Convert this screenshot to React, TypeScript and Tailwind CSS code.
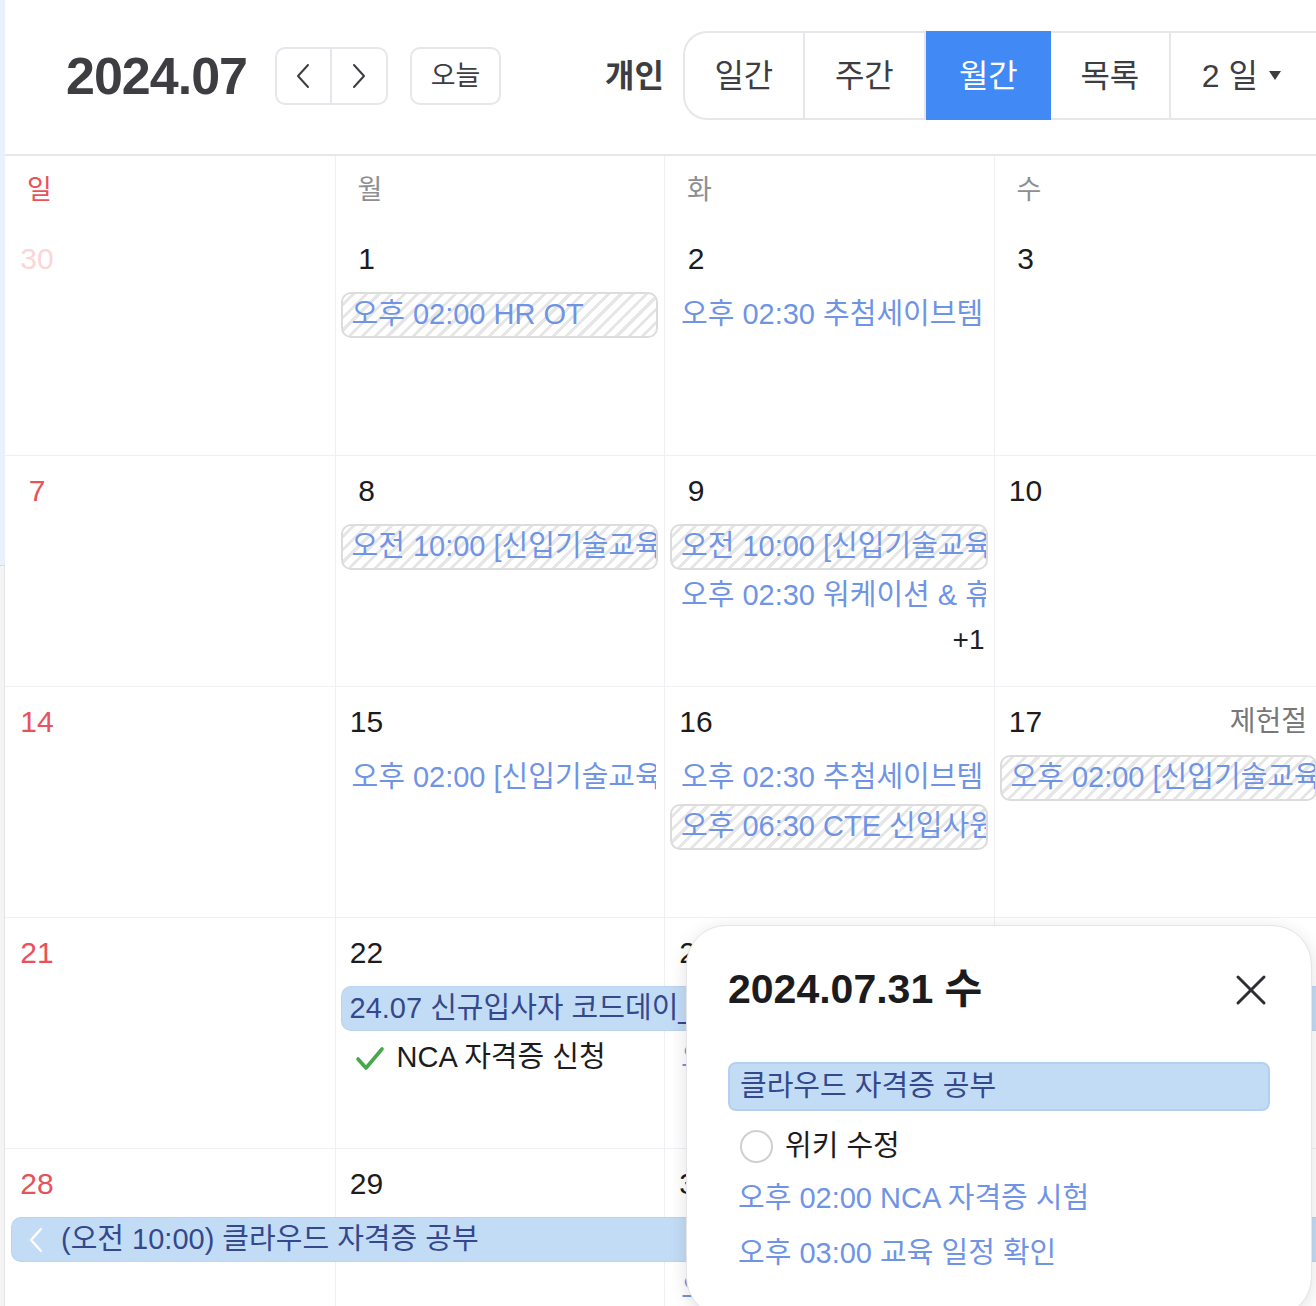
import React from "react";

type Ev =
  | { kind: "hatch" | "plain"; text: string; row: number; span?: number }
  | { kind: "bar"; text: string; row: number; start: number; end: number; chevron?: boolean }
  | { kind: "check"; text: string; row: number }
  | { kind: "more"; text: string; row: number };

type Day = { d: number; prev?: boolean; holiday?: string; events?: Ev[] };

const COLSTART = ["col-start-1", "col-start-2", "col-start-3", "col-start-4", "col-start-5", "col-start-6", "col-start-7"];
const COLEND = ["col-end-1", "col-end-2", "col-end-3", "col-end-4", "col-end-5", "col-end-6", "col-end-7", "col-end-8"];
const ROWSTART = ["row-start-1", "row-start-2", "row-start-3", "row-start-4", "row-start-5"];

const weeks: Day[][] = [
  [
    { d: 30, prev: true },
    { d: 1, events: [{ kind: "hatch", text: "오후 02:00 HR OT", row: 2 }] },
    { d: 2, events: [{ kind: "plain", text: "오후 02:30 추첨세이브템", row: 2 }] },
    { d: 3 },
    { d: 4 },
    { d: 5 },
    { d: 6 },
  ],
  [
    { d: 7 },
    { d: 8, events: [{ kind: "hatch", text: "오전 10:00 [신입기술교육] 온보딩", row: 2 }] },
    {
      d: 9,
      events: [
        { kind: "hatch", text: "오전 10:00 [신입기술교육] 온보딩", row: 2 },
        { kind: "plain", text: "오후 02:30 워케이션 & 휴가", row: 3 },
        { kind: "more", text: "+1", row: 4 },
      ],
    },
    { d: 10 },
    { d: 11 },
    { d: 12 },
    { d: 13 },
  ],
  [
    { d: 14 },
    { d: 15, events: [{ kind: "plain", text: "오후 02:00 [신입기술교육] 실습", row: 2 }] },
    {
      d: 16,
      events: [
        { kind: "plain", text: "오후 02:30 추첨세이브템", row: 2 },
        { kind: "hatch", text: "오후 06:30 CTE 신입사원 모임", row: 3 },
      ],
    },
    { d: 17, holiday: "제헌절", events: [{ kind: "hatch", text: "오후 02:00 [신입기술교육] 실습", row: 2 }] },
    { d: 18 },
    { d: 19 },
    { d: 20 },
  ],
  [
    { d: 21 },
    {
      d: 22,
      events: [
        { kind: "bar", text: "24.07 신규입사자 코드데이_온보딩 프로젝트", row: 2, start: 2, end: 8 },
        { kind: "check", text: "NCA 자격증 신청", row: 3 },
      ],
    },
    { d: 23, events: [{ kind: "plain", text: "오후 02:00 교육 일정", row: 3 }] },
    { d: 24 },
    { d: 25 },
    { d: 26 },
    { d: 27 },
  ],
  [
    {
      d: 28,
      events: [{ kind: "bar", text: "(오전 10:00) 클라우드 자격증 공부", row: 2, start: 1, end: 8, chevron: true }],
    },
    { d: 29 },
    { d: 30, events: [{ kind: "plain", text: "오후 02:00 NCA", row: 3 }] },
    { d: 31 },
    { d: 1, prev: true },
    { d: 2, prev: true },
    { d: 3, prev: true },
  ],
];

const WEEKDAYS = ["일", "월", "화", "수", "목", "금", "토"];

const HATCH =
  "bg-[repeating-linear-gradient(135deg,#ffffff_0px,#ffffff_6px,#e6e6e6_6px,#e6e6e6_9px)] border-2 border-[#dcdcdc]";

function EventItem({ ev, col }: { ev: Ev; col: number }) {
  if (ev.kind === "bar") {
    return (
      <div
        className={`${ROWSTART[ev.row - 1]} ${COLSTART[ev.start - 1]} ${COLEND[ev.end - 1]} self-start ml-[6px] h-[45px] rounded-l-[10px] bg-[#c3dcf5] border border-[#b9d3f0] border-r-0 flex items-center pl-[8px] overflow-hidden whitespace-nowrap text-[29px] text-[#35488c]`}
      >
        {ev.chevron && (
          <svg width="14" height="26" viewBox="0 0 14 26" className="mr-[18px] ml-[9px] shrink-0">
            <polyline points="12,2 2,13 12,24" fill="none" stroke="#ffffff" strokeWidth="2.4" strokeLinecap="round" strokeLinejoin="round" />
          </svg>
        )}
        {ev.text}
      </div>
    );
  }
  const pos = `${ROWSTART[ev.row - 1]} ${COLSTART[col]}`;
  if (ev.kind === "more") {
    return (
      <div className={`${pos} self-start h-[36px] leading-[36px] text-right pr-[9px] text-[28px] text-[#1f1f1f]`}>
        {ev.text}
      </div>
    );
  }
  if (ev.kind === "check") {
    return (
      <div className={`${pos} self-start h-[46px] ml-[20px] flex items-center whitespace-nowrap overflow-hidden text-[29px] text-[#1c1c1e]`}>
        <svg width="30" height="27" viewBox="0 0 30 27" className="mr-[12px] shrink-0">
          <polyline points="3,14 11,23 27,4" fill="none" stroke="#46a84c" strokeWidth="3.6" strokeLinecap="round" strokeLinejoin="round" />
        </svg>
        {ev.text}
      </div>
    );
  }
  return (
    <div
      className={`${pos} self-start mx-[6px] h-[46px] rounded-[10px] flex items-center px-[9px] overflow-hidden whitespace-nowrap text-[29px] text-[#6f94e6] ${
        ev.kind === "hatch" ? HATCH : "border-2 border-transparent"
      }`}
    >
      {ev.text}
    </div>
  );
}

function Week({ days, first }: { days: Day[]; first: boolean }) {
  return (
    <div
      className={`grid grid-cols-[repeat(7,329.5px)] grid-rows-[68px_49px_49px_49px_1fr] h-[231px] shrink-0 ${
        first ? "" : "border-t-[1.5px] border-[#eff0f4]"
      }`}
    >
      {days.map((_, i) => (
        <div
          key={"bg" + i}
          className={`row-start-1 row-end-6 ${COLSTART[i]} ${i === 0 ? "" : "border-l-[1.5px] border-[#eff0f4]"}`}
        />
      ))}
      {days.map((day, i) => {
        const color = i === 0 ? (day.prev ? "text-[#fcd6d6]" : "text-[#e8525a]") : day.prev ? "text-[#c4c4c8]" : "text-[#1c1c1e]";
        return (
          <div key={"n" + i} className={`row-start-1 ${COLSTART[i]} flex items-start justify-between pt-[18px]`}>
            <div className={`ml-[12px] w-[40px] text-center text-[30px] leading-[34px] ${color}`}>{day.d}</div>
            {day.holiday && (
              <div className="mr-[16px] text-[28px] leading-[34px] text-[#77777c]">{day.holiday}</div>
            )}
          </div>
        );
      })}
      {days.map((day, i) => (day.events || []).map((ev, k) => <EventItem key={"e" + i + "-" + k} ev={ev} col={i} />))}
    </div>
  );
}

export default function App() {
  return (
    <div className="relative flex w-[1316px] h-[1306px] overflow-hidden bg-white font-['Liberation_Sans','Noto_Sans_CJK_KR',sans-serif]">
      {/* left sidebar edge */}
      <div className="w-[5px] shrink-0 flex flex-col">
        <div className="h-[565px] bg-[#e9f2fc]" />
        <div className="flex-1 bg-[#f4f4f5] border-t border-[#dadada] border-r border-r-[#e4e4e7]" />
      </div>

      <div className="flex-1 min-w-0 flex flex-col overflow-hidden">
        {/* header */}
        <div className="h-[156px] shrink-0 border-b-2 border-[#e8e8ec] flex items-start whitespace-nowrap">
          <div className="flex items-center h-[152px] pl-[61px]">
            <div className="text-[52px] font-bold tracking-[-1px] text-[#3d3d42] leading-none">2024.07</div>
            <div className="ml-[28px] flex h-[58px] w-[113px] rounded-[10px] border-2 border-[#e6e7eb]">
              <div className="w-[55px] flex items-center justify-center border-r-2 border-[#e6e7eb]">
                <svg width="16" height="26" viewBox="0 0 16 26">
                  <polyline points="13,2 3,13 13,24" fill="none" stroke="#3d3d42" strokeWidth="2" strokeLinecap="round" strokeLinejoin="round" />
                </svg>
              </div>
              <div className="flex-1 flex items-center justify-center">
                <svg width="16" height="26" viewBox="0 0 16 26">
                  <polyline points="3,2 13,13 3,24" fill="none" stroke="#3d3d42" strokeWidth="2" strokeLinecap="round" strokeLinejoin="round" />
                </svg>
              </div>
            </div>
            <div className="ml-[22px] h-[58px] w-[91px] rounded-[10px] border-2 border-[#e6e7eb] flex items-center justify-center text-[27px] text-[#3d3d42]">
              오늘
            </div>
            <div className="ml-[104px] text-[32px] font-bold text-[#3d3d42]">개인</div>
          </div>
          <div className="ml-[19px] mt-[31px] flex h-[89px] rounded-l-[24px] border-2 border-r-0 border-[#e6e7eb] text-[32px] text-[#3d3d42] shrink-0">
            <div className="w-[120px] flex items-center justify-center border-r-2 border-[#e6e7eb]">일간</div>
            <div className="w-[121px] flex items-center justify-center border-r-2 border-[#e6e7eb]">주간</div>
            <div className="w-[125px] -my-[2px] flex items-center justify-center bg-[#4189f5] text-white">월간</div>
            <div className="w-[120px] flex items-center justify-center border-r-2 border-[#e6e7eb]">목록</div>
            <div className="w-[160px] flex items-center pl-[31px]">
              <span>2 일</span>
              <svg width="12" height="9" viewBox="0 0 12 9" className="ml-[11px]">
                <polygon points="0,0 12,0 6,9" fill="#3d3d42" />
              </svg>
            </div>
          </div>
        </div>

        {/* weekday header */}
        <div className="grid grid-cols-[repeat(7,329.5px)] h-[68px] shrink-0">
          {WEEKDAYS.map((w, i) => (
            <div
              key={w}
              className={`pl-[22px] pt-[16px] text-[27px] leading-[36px] ${i === 0 ? "text-[#e8525a]" : "text-[#8e8e93] border-l-[1.5px] border-[#eff0f4]"}`}
            >
              {w}
            </div>
          ))}
        </div>

        {weeks.map((w, i) => (
          <Week key={i} days={w} first={i === 0} />
        ))}
      </div>

      {/* day popup */}
      <div className="absolute left-[686px] top-[925px] w-[626px] h-[392px] rounded-[40px] bg-white border-[1.5px] border-[#e4e4e9] shadow-[0_4px_18px_rgba(0,0,0,0.12)] px-[41px]">
        <div className="flex items-center justify-between h-[136px] pb-[8px]">
          <div className="text-[41px] font-bold text-[#1c1c1e]">2024.07.31 수</div>
          <svg width="32" height="32" viewBox="0 0 32 32" className="mr-[3px]">
            <line x1="3" y1="3" x2="29" y2="29" stroke="#2f2f33" strokeWidth="3" strokeLinecap="round" />
            <line x1="29" y1="3" x2="3" y2="29" stroke="#2f2f33" strokeWidth="3" strokeLinecap="round" />
          </svg>
        </div>
        <div className="h-[49px] rounded-[8px] bg-[#c3dcf5] border-2 border-[#b5d0ef] flex items-center px-[10px] text-[29px] text-[#35488c] whitespace-nowrap">
          클라우드 자격증 공부
        </div>
        <div className="mt-[15px] h-[41px] flex items-center pl-[12px] text-[29px] text-[#1c1c1e]">
          <div className="w-[33px] h-[33px] rounded-full border-2 border-[#cfcfd3] mr-[12px]" />
          위키 수정
        </div>
        <div className="mt-[9px] h-[45px] flex items-center pl-[10px] text-[29px] text-[#6f94e6]">
          오후 02:00 NCA 자격증 시험
        </div>
        <div className="mt-[10px] h-[45px] flex items-center pl-[10px] text-[29px] text-[#6f94e6]">
          오후 03:00 교육 일정 확인
        </div>
      </div>
    </div>
  );
}
